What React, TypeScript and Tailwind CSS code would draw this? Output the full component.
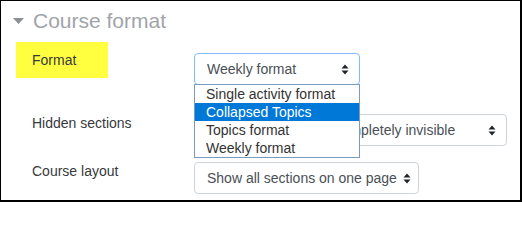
import React from 'react'

const options = ['Single activity format', 'Collapsed Topics', 'Topics format', 'Weekly format']

function SortArrows() {
  return (
    <svg width="8" height="11" viewBox="0 0 8 11" className="shrink-0">
      <path d="M4 0.5 L7.5 4.5 L0.5 4.5 Z" fill="#212529" />
      <path d="M0.5 6.5 L7.5 6.5 L4 10.5 Z" fill="#212529" />
    </svg>
  )
}

function Select({ value, width, focused }: { value: string; width: string; focused?: boolean }) {
  return (
    <div
      className={`flex h-[32px] items-center justify-between rounded-[4px] border bg-white pl-3 pr-[10px] text-[14px] text-[#495057] ${width} ${
        focused ? 'border-[#80bdff]' : 'border-[#ced4da]'
      }`}
    >
      <span className="whitespace-nowrap">{value}</span>
      <SortArrows />
    </div>
  )
}

export default function App() {
  return (
    <div
      className="relative h-[202px] w-[522px] overflow-hidden border-t border-l border-r-2 border-b-2 border-black bg-white text-[#373a3c]"
      style={{ fontFamily: '"Liberation Sans", Arial, sans-serif' }}
    >
      {/* Section header */}
      <div className="mt-[7px] flex items-center pl-[12px]">
        <svg width="11" height="7" viewBox="0 0 11 7" className="mr-[9px] mt-[1px]">
          <path d="M0 0 L11 0 L5.5 6 Z" fill="#8c8f93" />
        </svg>
        <span className="text-[21px] leading-[26px] text-[#a0a4a9]">Course format</span>
      </div>

      {/* Form rows */}
      <div className="mt-[8px] flex items-start">
        <div className="ml-[15px] flex h-[36px] w-[92px] items-center bg-[#ffff40] pl-4 text-[14px]">Format</div>
        <div className="ml-[86px] mt-[11px]">
          <Select value="Weekly format" width="w-[166px]" focused />
        </div>
      </div>

      <div className="mt-[29px] flex items-start">
        <div className="ml-[31px] w-[162px] text-[14px] leading-[18px]">Hidden sections</div>
        <Select value="Hidden sections are completely invisible" width="w-[313px]" />
      </div>

      <div className="mt-[16px] flex items-start">
        <div className="ml-[31px] w-[162px] text-[14px] leading-[18px]">Course layout</div>
        <Select value="Show all sections on one page" width="w-[225px] !pr-[7px] gap-[6px]" />
      </div>

      {/* Open dropdown list */}
      <div className="absolute left-[193px] top-[83px] w-[166px] border border-[#7a9ac0] bg-white text-[14px]">
        {options.map((o) => (
          <div
            key={o}
            className={`h-[18px] pl-[11px] leading-[18px] ${
              o === 'Collapsed Topics' ? 'bg-[#0078d7] text-white' : 'text-[#333]'
            }`}
          >
            {o}
          </div>
        ))}
      </div>
    </div>
  )
}
